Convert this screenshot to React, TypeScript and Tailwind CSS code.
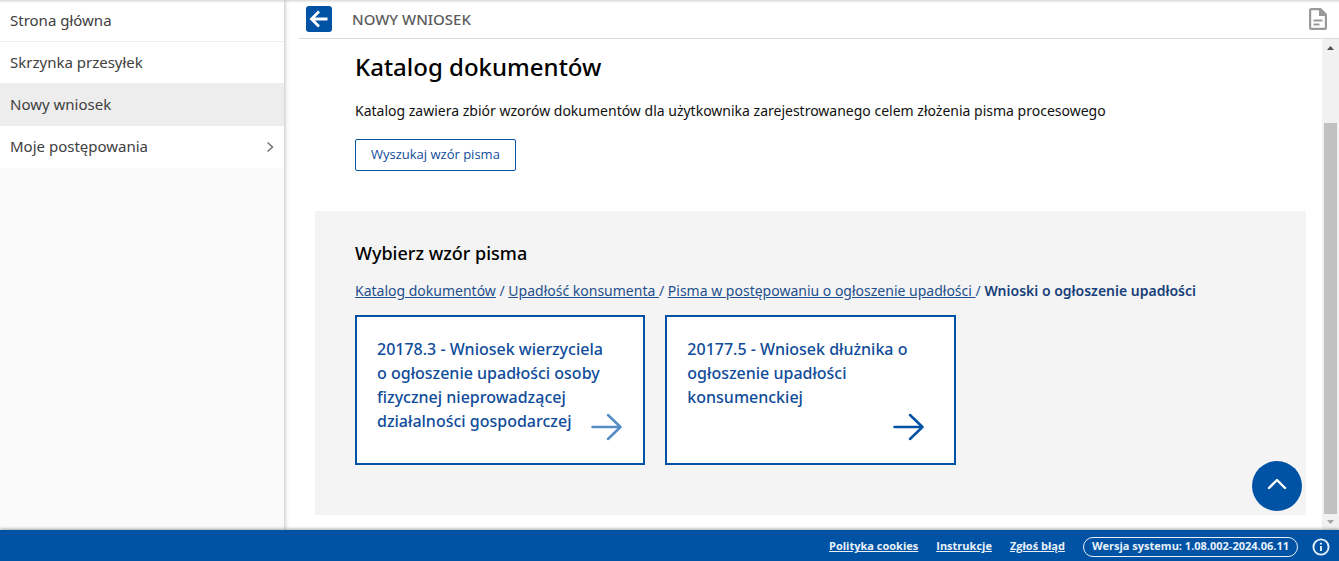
import React from 'react';

type Item = { label: string; active?: boolean; expandable?: boolean };

const menu: Item[] = [
  { label: 'Strona główna' },
  { label: 'Skrzynka przesyłek' },
  { label: 'Nowy wniosek', active: true },
  { label: 'Moje postępowania', expandable: true },
];

const crumbs = ['Katalog dokumentów', 'Upadłość konsumenta ', 'Pisma w postępowaniu o ogłoszenie upadłości '];

function ArrowRight() {
  return (
    <svg width="31" height="28" viewBox="0 0 31 28" fill="none" stroke="currentColor" strokeWidth="2.5" strokeLinecap="round" strokeLinejoin="round" aria-hidden="true">
      <path d="M1.5 14H29.5M17 2L29.5 14L17 26" />
    </svg>
  );
}

function Sidebar() {
  return (
    <nav className="relative z-10 w-[284px] shrink-0 bg-[#fafafa] shadow-[1px_0_4px_rgba(0,0,0,0.25)]">
      <ul className="bg-white">
        {menu.map((item) => (
          <li key={item.label}>
            <a
              href="#"
              className={
                "flex h-[42px] items-center justify-between border-b pr-2 pl-[10px] font-['Noto_Sans',sans-serif] text-[15px] text-[#404040] " +
                (item.active ? 'border-[#ededed] bg-[#ededed]' : item.expandable ? 'border-transparent' : 'border-[#ededed]')
              }
            >
              {item.label}
              {item.expandable && (
                <svg width="12" height="12" viewBox="0 0 12 12" fill="none" stroke="#777" strokeWidth="1.6" aria-hidden="true">
                  <path d="M3.5 1.5L8.5 6L3.5 10.5" />
                </svg>
              )}
            </a>
          </li>
        ))}
      </ul>
    </nav>
  );
}

function Header() {
  return (
    <header className="ml-[15px] flex h-[39px] shrink-0 items-center border-b border-[#dadada] pr-3 pl-[7px]">
      <button type="button" aria-label="Wstecz" className="flex size-[26px] items-center justify-center rounded-[3px] bg-[#0052a5] text-white">
        <svg width="20" height="18" viewBox="0 0 20 18" fill="none" stroke="currentColor" strokeWidth="2.8" aria-hidden="true">
          <path d="M18.5 9H3M10 1.5L2.5 9L10 16.5" />
        </svg>
      </button>
      <h1 className="ml-5 flex-1 font-['Noto_Sans',sans-serif] text-[15px] leading-5 font-medium text-[#5c5c5c]">NOWY WNIOSEK</h1>
      <button type="button" aria-label="Dokumenty">
        <svg width="18" height="22" viewBox="0 0 18 22" fill="none" stroke="#999" strokeWidth="2.2" aria-hidden="true">
          <path d="M11 1.1H2.5Q1.1 1.100 1.1 2.5V19.5Q1.100 20.9 2.5 20.9H15.5Q16.9 20.900 16.9 19.5V6.500L11.500 1.100Z" strokeLinejoin="round" />
          <path d="M10 1V8H17.5L11.500 1Z" fill="#999" stroke="none" />
          <path d="M4.5 12.5H13.5M4.5 16.5H10.5" />
        </svg>
      </button>
    </header>
  );
}

function Card({ title, arrow }: { title: string; arrow: string }) {
  return (
    <a href="#" className="relative min-h-[150px] border-2 border-[#0052a5] bg-white py-5 pr-7 pl-5 font-['Noto_Sans',sans-serif] text-[16px] leading-6 font-medium text-[#0f4c9a]">
      {title}
      <span className={'absolute bottom-[22px] ' + arrow}>
        <ArrowRight />
      </span>
    </a>
  );
}

function Scrollbar() {
  return (
    <div aria-hidden="true" className="flex w-[17px] shrink-0 flex-col items-center bg-[#f1f1f1]">
      <svg className="shrink-0" width="17" height="17" viewBox="0 0 17 17">
        <path d="M5 11H12L8.500 7Z" fill="#505050" />
      </svg>
      <div className="h-[67px] shrink-0" />
      <div className="w-[13px] flex-1 bg-[#c1c1c1]" />
      <svg className="shrink-0" width="17" height="16" viewBox="0 0 17 16">
        <path d="M5 6H12L8.500 10Z" fill="#a3a3a3" />
      </svg>
    </div>
  );
}

export default function App() {
  return (
    <div className="flex min-h-screen flex-col bg-white font-['Open_Sans',sans-serif] text-black">
      <div className="relative flex flex-1">
        <div className="pointer-events-none absolute inset-x-0 top-0 z-20 h-[3px] bg-linear-to-b from-black/15 to-transparent" />
        <Sidebar />
        <div className="flex min-w-0 flex-1 flex-col">
          <Header />
          <div className="flex flex-1">
            <main className="min-w-0 flex-1 pt-3 pr-4 pb-[15px] pl-[31px]">
              <div className="px-10 pb-10">
                <h2 className="font-['Noto_Sans',sans-serif] text-[24px] leading-8 font-medium">Katalog dokumentów</h2>
                <p className="mt-[18px] font-['Noto_Sans',sans-serif] text-[14px] leading-5 text-[#111]">
                  Katalog zawiera zbiór wzorów dokumentów dla użytkownika zarejestrowanego celem złożenia pisma procesowego
                </p>
                <button type="button" className="mt-[18px] flex h-8 items-center rounded-[2px] border border-[#0052a5] px-[15px] text-[13px] text-[#0f4c9a]">
                  Wyszukaj wzór pisma
                </button>
              </div>
              <section className="bg-[#f4f4f4] px-10 pt-[30px] pb-[50px]">
                <h3 className="font-['Noto_Sans',sans-serif] text-[18px] leading-6 font-medium">Wybierz wzór pisma</h3>
                <nav aria-label="Ścieżka" className="mt-4 font-['Noto_Sans',sans-serif] text-[14px] leading-5 whitespace-pre-wrap text-[#1f4f8c]">
                  {crumbs.map((c) => (
                    <React.Fragment key={c}>
                      <a href="#" className="underline">{c}</a>
                      {c.endsWith(' ') ? '/ ' : ' / '}
                    </React.Fragment>
                  ))}
                  <span className="font-semibold text-[#173f7a]">Wnioski o ogłoszenie upadłości</span>
                </nav>
                <div className="mt-[14px] grid grid-cols-3 gap-5">
                  <Card title="20178.3 - Wniosek wierzyciela o ogłoszenie upadłości osoby fizycznej nieprowadzącej działalności gospodarczej" arrow="right-[21px] text-[#548dc6]" />
                  <Card title="20177.5 - Wniosek dłużnika o ogłoszenie upadłości konsumenckiej" arrow="right-[30px] text-[#0052a5]" />
                </div>
              </section>
            </main>
            <Scrollbar />
          </div>
        </div>
        <button type="button" aria-label="Do góry" className="absolute right-[37px] bottom-[19px] flex size-[50px] items-center justify-center rounded-full bg-[#0052a5] text-white">
          <svg width="20" height="12" viewBox="0 0 20 12" fill="none" stroke="currentColor" strokeWidth="2.4" strokeLinecap="round" strokeLinejoin="round" className="mb-1" aria-hidden="true">
            <path d="M2 10L10 2L18 10" />
          </svg>
        </button>
      </div>
      <footer className="relative z-20 flex h-[31px] shrink-0 items-center justify-end gap-[18px] bg-[#0052a5] pt-[2px] pr-[9px] text-[11px] font-bold text-[#e8f1fa] shadow-[0_-1px_3px_rgba(0,0,0,0.35)]">
        <a href="#" className="underline">Polityka cookies</a>
        <a href="#" className="underline">Instrukcje</a>
        <a href="#" className="underline">Zgłoś błąd</a>
        <div className="flex items-center gap-[14px]">
          <span className="flex h-5 items-center rounded-full border border-[#e8f1fa] px-2">Wersja systemu: 1.08.002-2024.06.11</span>
          <button type="button" aria-label="Informacje">
            <svg width="18" height="18" viewBox="0 0 18 18" fill="none" stroke="currentColor" strokeWidth="1.9" aria-hidden="true">
              <circle cx="9" cy="9" r="7.600" />
              <path d="M9 8V13M9 4.800V6.600" />
            </svg>
          </button>
        </div>
      </footer>
    </div>
  );
}
